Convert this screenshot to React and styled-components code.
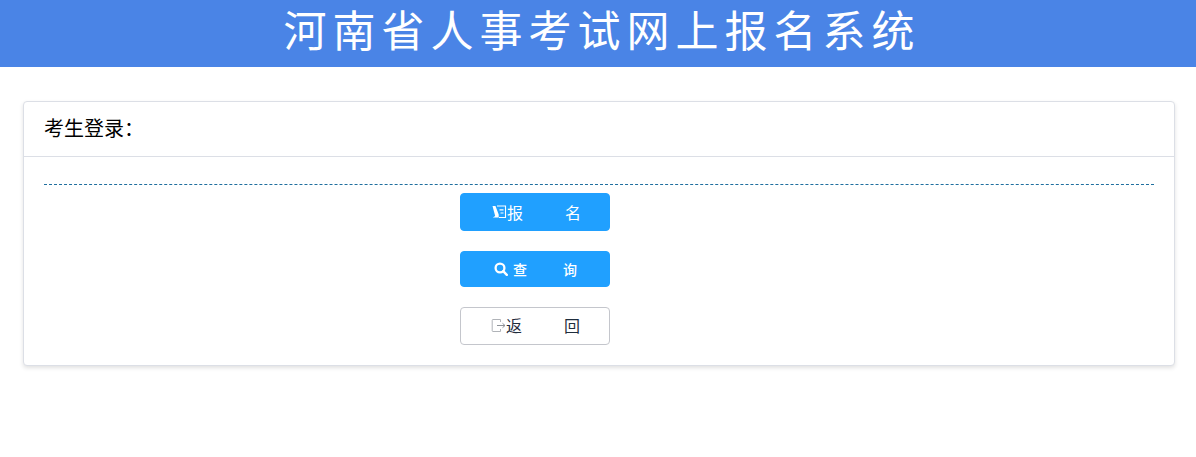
import React from "react";
import styled, { createGlobalStyle } from "styled-components";

const Global = createGlobalStyle`
  html, body { margin: 0; padding: 0; background: #fff; }
  body { font-family: "Liberation Sans", "Noto Sans CJK SC", sans-serif; color: #000; }
`;
const Page = styled.div`
  width: 1196px;
  height: 457px;
  overflow: hidden;
  background: #fff;
`;
const Banner = styled.header`
  height: 67px;
  background: #4a84e6;
  display: flex;
  justify-content: center;
  align-items: center;
`;
const Title = styled.h1`
  margin: 0 0 10px 8px;
  font: 400 43px/1 "Noto Sans CJK SC", serif;
  letter-spacing: 6px;
  color: #fff;
  white-space: nowrap;
`;
const Card = styled.section`
  box-sizing: border-box;
  width: 1152px;
  height: 265px;
  margin: 34px 0 0 23px;
  background: #fff;
  border: 1px solid #dcdfe6;
  border-radius: 4px;
  box-shadow: 0 2px 4px rgba(0, 0, 0, 0.12);
`;
const CardHead = styled.div`
  box-sizing: border-box;
  height: 55px;
  padding: 0 20px 3px;
  display: flex;
  align-items: center;
  border-bottom: 1px solid #dcdfe6;
  font-size: 20px;
`;
const CardBody = styled.div`
  padding: 27px 20px 0;
`;
const Dashed = styled.div`
  border-top: 1px dashed #1f6f9f;
  margin-bottom: 8px;
`;
const Actions = styled.div`
  margin-left: 416px;
  display: flex;
  flex-direction: column;
  align-items: flex-start;
  gap: 20px;
`;
const Button = styled.button`
  box-sizing: border-box;
  width: 150px;
  height: ${(p) => p.$h}px;
  padding: 0 0 ${(p) => p.$lift}px ${(p) => p.$pad}px;
  display: flex;
  align-items: center;
  justify-content: flex-start;
  border-radius: 4px;
  border: 1px solid ${(p) => (p.$plain ? "#c4c6cc" : "#20a0ff")};
  background: ${(p) => (p.$plain ? "#fff" : "#20a0ff")};
  color: ${(p) => (p.$plain ? "#1f2d3d" : "#fff")};
  font: ${(p) => p.$weight} ${(p) => p.$fs}px "Liberation Sans", "Noto Sans CJK SC", sans-serif;
`;
const Label = styled.span`
  display: inline-flex;
  width: ${(p) => p.$w}px;
  justify-content: space-between;
  margin-left: ${(p) => p.$ml}px;
`;

const OrderIcon = () => (
  <svg width="15" height="14" viewBox="0 0 15 14" fill="none">
    <path d="M0.5 1h3l3.2 8.5V12.5H0.8L3.2 11z" fill="#fff" />
    <path d="M5 1h8.5v11.5H7" stroke="#fff" strokeWidth="1.1" />
    <path d="M7.5 4.8h4M8.5 8h3" stroke="#fff" strokeWidth="1.2" />
  </svg>
);
const SearchIcon = () => (
  <svg width="14" height="14" viewBox="0 0 14 14" fill="none">
    <circle cx="6" cy="6" r="4.4" stroke="#fff" strokeWidth="2.3" />
    <path d="M9.2 9.2l3.6 3.6" stroke="#fff" strokeWidth="2.4" strokeLinecap="round" />
  </svg>
);
const ExitIcon = () => (
  <svg width="15" height="15" viewBox="0 0 15 15" fill="none">
    <path d="M9.5 4V1.5H2a.8.8 0 0 0-.8.8v10.4a.8.8 0 0 0 .8.8h7.5V11" stroke="#b0b3b8" strokeWidth="1" />
    <path d="M6 7.5h8M11.5 5.3l2.5 2.2-2.5 2.2" stroke="#8f9399" strokeWidth="1" />
  </svg>
);

export default function App() {
  return (
    <Page>
      <Global />
      <Banner>
        <Title>河南省人事考试网上报名系统</Title>
      </Banner>
      <Card>
        <CardHead>考生登录：</CardHead>
        <CardBody>
          <Dashed />
          <Actions>
            <Button $h={38} $lift={1} $pad={31} $fs={16} $weight={400}>
              <OrderIcon />
              <Label $w={74} $ml={0}><span>报</span><span>名</span></Label>
            </Button>
            <Button $h={36} $lift={1} $pad={33} $fs={14} $weight={500}>
              <SearchIcon />
              <Label $w={64} $ml={5}><span>查</span><span>询</span></Label>
            </Button>
            <Button $h={38} $lift={2} $pad={30} $fs={16} $weight={400} $plain>
              <ExitIcon />
              <Label $w={74} $ml={0}><span>返</span><span>回</span></Label>
            </Button>
          </Actions>
        </CardBody>
      </Card>
    </Page>
  );
}
